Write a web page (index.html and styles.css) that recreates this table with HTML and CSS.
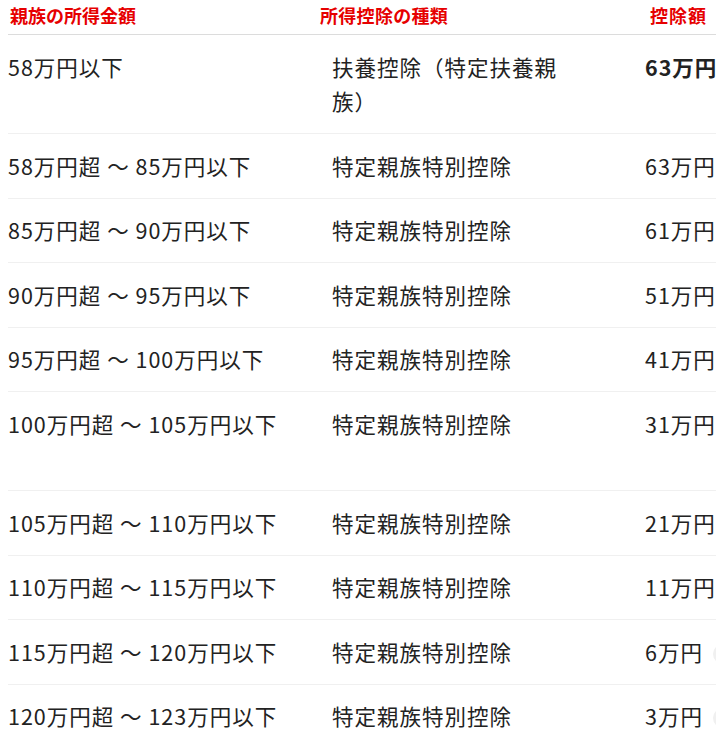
FILE: index.html
```html
<!DOCTYPE html>
<html lang="ja">
<head>
<meta charset="utf-8">
<title>特定親族特別控除</title>
<link rel="stylesheet" href="styles.css">
</head>
<body>
<div class="wrap">
<table class="deduction">
  <colgroup>
    <col class="c1"><col class="c2"><col class="c3">
  </colgroup>
  <thead>
    <tr>
      <th class="h1">親族の所得金額</th>
      <th class="h2">所得控除の種類</th>
      <th class="h3">控除額</th>
    </tr>
  </thead>
  <tbody>
    <tr class="tall"><td>58万円以下</td><td>扶養控除（特定扶養親族）</td><td><b>63万円</b><span class="badge"></span></td></tr>
    <tr><td>58万円超 〜 85万円以下</td><td>特定親族特別控除</td><td>63万円<span class="badge"></span></td></tr>
    <tr><td>85万円超 〜 90万円以下</td><td>特定親族特別控除</td><td>61万円<span class="badge"></span></td></tr>
    <tr><td>90万円超 〜 95万円以下</td><td>特定親族特別控除</td><td>51万円<span class="badge"></span></td></tr>
    <tr><td>95万円超 〜 100万円以下</td><td>特定親族特別控除</td><td>41万円<span class="badge"></span></td></tr>
    <tr class="tall"><td>100万円超 〜 105万円以下</td><td>特定親族特別控除</td><td>31万円<span class="badge"></span></td></tr>
    <tr><td>105万円超 〜 110万円以下</td><td>特定親族特別控除</td><td>21万円<span class="badge"></span></td></tr>
    <tr><td>110万円超 〜 115万円以下</td><td>特定親族特別控除</td><td>11万円<span class="badge"></span></td></tr>
    <tr><td>115万円超 〜 120万円以下</td><td>特定親族特別控除</td><td>6万円<span class="badge"></span></td></tr>
    <tr class="last"><td>120万円超 〜 123万円以下</td><td>特定親族特別控除</td><td>3万円<span class="badge"></span></td></tr>
  </tbody>
</table>
</div>
</body>
</html>
```
FILE: styles.css
```css
html, body {
  margin: 0;
  padding: 0;
  background: #fff;
  overflow: hidden;
}
.wrap {
  padding-left: 8px;
  width: 900px;
}
.deduction {
  border-collapse: collapse;
  table-layout: fixed;
  width: 860px;
  font-family: "Noto Sans CJK JP", "Noto Sans", sans-serif;
  color: #222;
}
.c1 { width: 312px; }
.c2 { width: 312px; }
.c3 { width: 236px; }

.deduction th {
  font-family: "Liberation Serif", "Noto Sans CJK JP", serif;
  font-weight: 700;
  font-size: 18px;
  line-height: 26px;
  color: #e60000;
  text-align: left;
  height: 34px;
  padding: 0;
  vertical-align: middle;
  border-bottom: 1px solid #dcdcdc;
  white-space: nowrap;
}
.deduction th.h1 { padding-left: 2px; }
.deduction th.h2 { padding-left: 0; letter-spacing: 0.3px; }
.deduction th.h3 { padding-left: 18px; letter-spacing: 1px; }

.deduction td {
  font-size: 21.5px;
  letter-spacing: 1px;
  line-height: 34.5px;
  padding: 14.5px 0;
  vertical-align: top;
  border-bottom: 1px solid #f0f0f0;
  white-space: nowrap;
}
.deduction tr.last td {
  border-bottom: none;
}
.deduction td:nth-child(2) {
  padding-left: 12px;
  padding-right: 60px;
  white-space: normal;
}
.deduction td:nth-child(3) {
  padding-left: 13px;
}
.deduction tr.tall td {
  height: 69px;
}
.deduction b {
  font-weight: 700;
}
.badge {
  display: inline-block;
  width: 40px;
  height: 20px;
  margin-left: 10px;
  border-radius: 10px;
  background: #f0f0f0;
  vertical-align: -3px;
}
```
